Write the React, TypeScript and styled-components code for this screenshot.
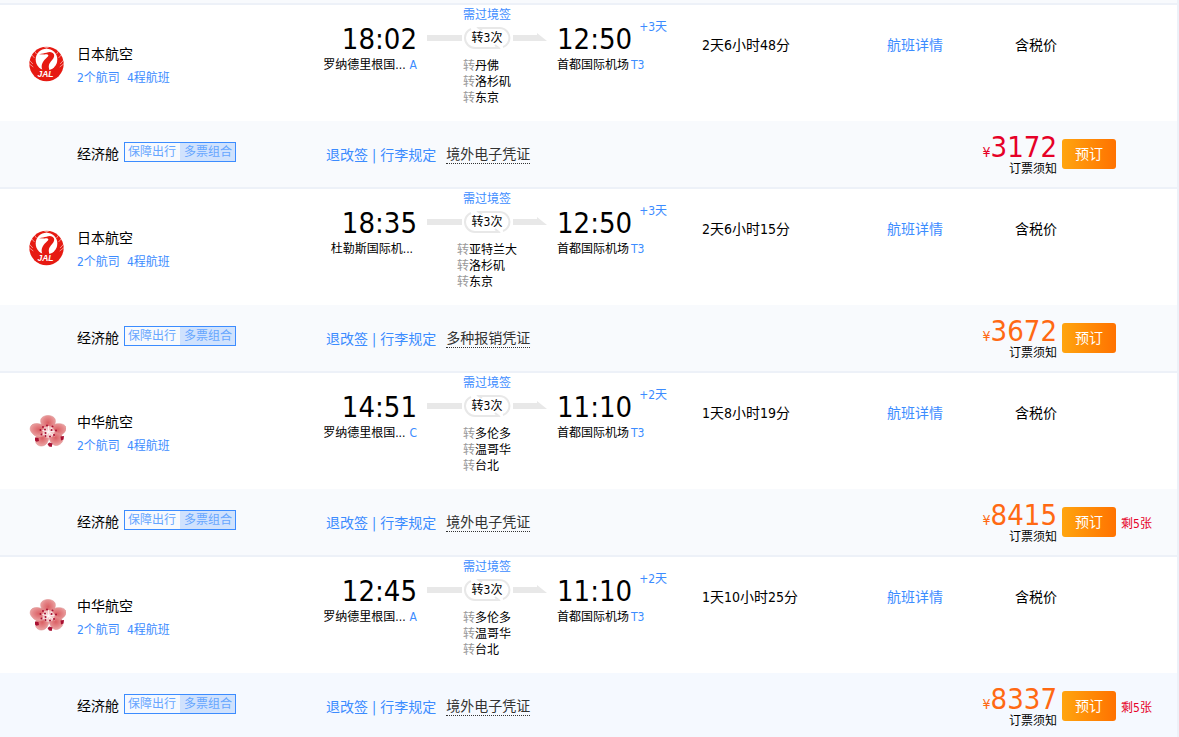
import React from "react";
import styled, { createGlobalStyle, css } from "styled-components";

const GlobalStyle = createGlobalStyle`
  * { box-sizing: border-box; }
  body {
    margin: 0;
    background: #fff;
    color: #000;
    font: 14px/20px "DejaVu Sans Condensed", "Noto Sans CJK SC", sans-serif;
  }
`;

const blue = "#3c8cff";
const line = "#edf1f8";

const Page = styled.main`
  height: 100vh;
  overflow: hidden;
  padding-top: 3px;
  background: #f8fafd;
  border-right: 2px solid ${line};
`;

const Flight = styled.article`
  border-top: 2px solid ${line};
  background: #fff;
`;

const Summary = styled.div`
  display: grid;
  grid-template-columns: 320fr 97fr 140fr 145fr 185fr 128fr 162fr;
  height: 116px;
`;

const Airline = styled.div`
  display: flex;
  align-items: flex-start;
  padding: 40px 0 0 28px;
`;

const Logo = styled.svg`
  flex: none;
  width: 38px;
  height: 38px;
  margin-right: 11px;
`;

const AirlineName = styled.div`
  line-height: 18px;
`;

const Small = styled.div`
  display: flex;
  gap: 7px;
  margin-top: 6px;
  font-size: 12px;
  line-height: 18px;
  color: ${blue};
`;

const Place = styled.div<{ $end?: boolean }>`
  display: flex;
  flex-direction: column;
  align-items: ${(p) => (p.$end ? "flex-end" : "flex-start")};
  padding-top: 17px;
  white-space: nowrap;
`;

const TimeRow = styled.div`
  display: flex;
  align-items: flex-start;
  gap: 7px;
`;

const Time = styled.time`
  font-size: 29px;
  line-height: 35px;
`;

const DayShift = styled.span`
  font-size: 12px;
  line-height: 10px;
  color: ${blue};
`;

const Airport = styled.div<{ $gap: number }>`
  display: flex;
  gap: ${(p) => p.$gap}px;
  font-size: 12px;
  line-height: 16px;
`;

const Terminal = styled.span`
  color: ${blue};
`;

const Route = styled.div`
  display: flex;
  flex-direction: column;
  align-items: center;
  padding-top: 2px;
  font-size: 12px;
  line-height: 16px;
`;

const Visa = styled.a`
  color: ${blue};
  text-decoration: none;
`;

const Track = styled.div`
  display: grid;
  place-items: center;
  margin: 4px 0 9px;
  > * { grid-area: 1 / 1; }
`;

const Stops = styled.ul`
  margin: 0;
  padding: 0;
  list-style: none;
`;

const Via = styled.span`
  color: #999;
`;

const Cell = styled.div`
  padding-top: 30px;
  white-space: nowrap;
`;

const Link = styled.a`
  color: ${blue};
  text-decoration: none;
`;

const Fare = styled.div<{ $active?: boolean }>`
  display: grid;
  grid-template-columns: 326fr 731fr 120fr;
  align-items: center;
  height: 66px;
  background: ${(p) => (p.$active ? "#f5f9ff" : "#f8fafd")};
`;

const Cabin = styled.div`
  display: flex;
  align-items: center;
  gap: 5px;
  padding-left: 77px;
  white-space: nowrap;
`;

const Tag = styled.span`
  display: flex;
  margin-bottom: 4px;
  border: 1px solid ${blue};
  font-size: 12px;
  line-height: 18px;
  color: #66a6ff;
`;

const TagPart = styled.span<{ $filled?: boolean }>`
  padding: 0 4px 0 3px;
  ${(p) =>
    p.$filled &&
    css`
      padding: 0 3px 0 4px;
      background: #d0e2fd;
    `}
`;

const Middle = styled.div`
  display: flex;
  align-items: center;
  justify-content: space-between;
`;

const Rules = styled.div`
  display: flex;
  align-items: center;
  gap: 4px;
  padding-top: 2px;
  color: ${blue};
`;

const Voucher = styled.span`
  margin-left: 6px;
  line-height: 17px;
  color: #333;
  border-bottom: 1px dotted #333;
`;

const PriceBox = styled.div`
  display: flex;
  flex-direction: column;
  align-items: flex-end;
`;

const Price = styled.div<{ $best?: boolean }>`
  display: flex;
  align-items: baseline;
  height: 30px;
  font-size: 29px;
  line-height: 32px;
  color: ${(p) => (p.$best ? "#e60027" : "#ff6913")};
`;

const Currency = styled.span`
  font-size: 14px;
  line-height: 16px;
`;

const Note = styled.span`
  font-size: 12px;
  line-height: 16px;
`;

const Action = styled.div`
  display: flex;
  align-items: center;
  gap: 5px;
  padding-left: 5px;
`;

const BookButton = styled.button`
  width: 54px;
  height: 30px;
  padding: 0;
  border: 0;
  border-radius: 3px;
  background: linear-gradient(90deg, #ffa50f, #ff7200);
  color: #fff;
  font: inherit;
  cursor: pointer;
`;

const Left = styled.span`
  padding-top: 4px;
  font-size: 12px;
  line-height: 16px;
  white-space: nowrap;
  color: #e60027;
`;

function JalLogo() {
  return (
    <Logo viewBox="0 0 38 38" role="img" aria-label="JAL">
      <circle cx="18.500" cy="19" r="17.200" fill="#e61a12" />
      <path d="M14.500 1.500l4 2.200 4-2.200z" fill="#fff" opacity=".5" />
      <circle cx="18.500" cy="14.500" r="10.800" fill="#fff" />
      <path d="M11 9.300c3-1 5.500-1 7.500-1.600 3-1.500 6.500-.8 7.500 1.700.8 3-1.500 5-3.500 7.500-1.800 2.300-2.500 5-.5 9.100h-7c-2.200-3.500-1.500-7.500 1-10.500 2.300-2.700 4.600-4 4.300-5.300-.3-1-2-.9-3.500-.8z" fill="#e61a12" />
      <path d="M.8 14.500l4 4.500M.8 18.500l4.500 3.500M36.200 14.500l-4 4.500M36.200 18.500L31.700 22M3 9l3.500 4M34 9l-3.500 4M6 5.500l2.500 3.500M31 5.500L28.500 9" fill="none" stroke="#fff" strokeWidth=".7" opacity=".75" />
      <text x="9.500" y="32" fill="#fff" fontFamily="Liberation Sans" fontWeight="700" fontStyle="italic" fontSize="8.500">JAL</text>
    </Logo>
  );
}

function BlossomLogo() {
  const dots = [
    [15, 14], [19, 12.500], [24.500, 13.500], [12.500, 17], [28, 17.500], [13.500, 21.500],
    [17.500, 23], [22, 23.500], [26, 22], [17, 16.500], [23.500, 17], [17.500, 20],
  ];
  return (
    <Logo viewBox="0 0 38 38" role="img" aria-label="China Airlines">
      <defs>
        <radialGradient id="petal" cx=".5" cy=".45" r=".6">
          <stop offset="0" stopColor="#da5f63" />
          <stop offset=".6" stopColor="#e58a8c" />
          <stop offset="1" stopColor="#eeb0ae" />
        </radialGradient>
      </defs>
      <g fill="url(#petal)" stroke="#d98485" strokeWidth=".5">
        <path d="M20.500 19C15 16 11.500 9.500 13 6c1-2.300 4-3.500 7-3.500s6 1.200 7 3.500c1.500 3.500-1.500 10-6.500 13z" />
        <path d="M20.500 19C21 13 26.500 10.500 31 10.700c4.500 0 7.500 2.200 7 5.300-.7 4.500-7 8-10.500 8.300-3.500-.3-6-2.300-7-5.300z" />
        <path d="M20.500 19c6-1.500 13 1.500 14.300 5.500 1 4-2.300 7.500-6.300 8-4.500.3-8-5-8-13.500z" />
        <path d="M20.500 19c1.500 6-.5 13.500-6.500 14-3.500.3-6.800-2-6.500-6C7.800 22 14 18 20.500 19z" />
        <path d="M20.500 19C17 24 10 25.500 6 22c-2.500-2.200-4.200-4.500-3.800-7C2.700 12 5 10.500 9 10.600c5 .1 10.500 3.400 11.500 8.400z" />
      </g>
      <circle cx="20.500" cy="19" r="6" fill="#fbe3e2" opacity=".65" />
      <path d="M20.500 19l-5-5M20.500 19v-6M20.500 19l4-5M20.500 19l7-1M20.500 19l6 4M20.500 19l2 5M20.500 19l-3 5M20.500 19l-7 3M20.500 19l-7-2" stroke="#fff" strokeWidth=".7" />
      <g fill="#a80f32">
        {dots.map(([x, y]) => (
          <circle key={`${x}-${y}`} cx={x} cy={y} r="1" />
        ))}
        <path d="M7 24.500l3.500.5.500 3-2.500.8-1.500-1.300zM32.500 23.500l3.500-.5-.5 3.500-2.500 1zM19.500 31l2-1.500 3 1-.8 3.500-2.700-.5z" />
      </g>
    </Logo>
  );
}

function TransferTrack() {
  return (
    <svg width="120" height="22" viewBox="0 0 120 22" aria-hidden="true">
      <path d="M0 8h35v6H0zM86 8h24V6l10 8H86z" fill="#e8e8e8" />
      <path d="M51 1h21a10 10 0 0 1 9 15a9 9 0 0 1-5 4M71 21H48a10 10 0 0 1-10-10a10 10 0 0 1 6-9" fill="none" stroke="#e8e8e8" strokeWidth="2" />
      <path d="M50 0l5 3M68 18l5 4" stroke="#e8e8e8" strokeWidth="2" />
    </svg>
  );
}

type FlightData = {
  airline: "日本航空" | "中华航空";
  depart: string;
  from: string;
  fromTerminal: string;
  stops: string[];
  arrive: string;
  days: number;
  duration: string;
  voucher: string;
  price: number;
  best?: boolean;
  left?: number;
  active?: boolean;
};

const flights: FlightData[] = [
  { airline: "日本航空", depart: "18:02", from: "罗纳德里根国...", fromTerminal: "A", stops: ["丹佛", "洛杉矶", "东京"], arrive: "12:50", days: 3, duration: "2天6小时48分", voucher: "境外电子凭证", price: 3172, best: true },
  { airline: "日本航空", depart: "18:35", from: "杜勒斯国际机...", fromTerminal: "", stops: ["亚特兰大", "洛杉矶", "东京"], arrive: "12:50", days: 3, duration: "2天6小时15分", voucher: "多种报销凭证", price: 3672 },
  { airline: "中华航空", depart: "14:51", from: "罗纳德里根国...", fromTerminal: "C", stops: ["多伦多", "温哥华", "台北"], arrive: "11:10", days: 2, duration: "1天8小时19分", voucher: "境外电子凭证", price: 8415, left: 5 },
  { airline: "中华航空", depart: "12:45", from: "罗纳德里根国...", fromTerminal: "A", stops: ["多伦多", "温哥华", "台北"], arrive: "11:10", days: 2, duration: "1天10小时25分", voucher: "境外电子凭证", price: 8337, left: 5, active: true },
];

function FlightRow({ flight: f }: { flight: FlightData }) {
  return (
    <Flight>
      <Summary>
        <Airline>
          {f.airline === "日本航空" ? <JalLogo /> : <BlossomLogo />}
          <div>
            <AirlineName>{f.airline}</AirlineName>
            <Small>
              <span>2个航司</span>
              <span>4程航班</span>
            </Small>
          </div>
        </Airline>
        <Place $end>
          <Time>{f.depart}</Time>
          <Airport $gap={4}>
            <span>{f.from}</span>
            <Terminal>{f.fromTerminal}</Terminal>
          </Airport>
        </Place>
        <Route>
          <Visa href="#visa">需过境签</Visa>
          <Track>
            <TransferTrack />
            <span>转3次</span>
          </Track>
          <Stops>
            {f.stops.map((s) => (
              <li key={s}>
                <Via>转</Via>
                {s}
              </li>
            ))}
          </Stops>
        </Route>
        <Place>
          <TimeRow>
            <Time>{f.arrive}</Time>
            <DayShift>+{f.days}天</DayShift>
          </TimeRow>
          <Airport $gap={2}>
            <span>首都国际机场</span>
            <Terminal>T3</Terminal>
          </Airport>
        </Place>
        <Cell>{f.duration}</Cell>
        <Cell>
          <Link href="#details">航班详情</Link>
        </Cell>
        <Cell>含税价</Cell>
      </Summary>
      <Fare $active={f.active}>
        <Cabin>
          <span>经济舱</span>
          <Tag>
            <TagPart>保障出行</TagPart>
            <TagPart $filled>多票组合</TagPart>
          </Tag>
        </Cabin>
        <Middle>
          <Rules>
            <Link href="#refund">退改签</Link>
            <span>|</span>
            <Link href="#baggage">行李规定</Link>
            <Voucher>{f.voucher}</Voucher>
          </Rules>
          <PriceBox>
            <Price $best={f.best}>
              <Currency>¥</Currency>
              <span>{f.price}</span>
            </Price>
            <Note>订票须知</Note>
          </PriceBox>
        </Middle>
        <Action>
          <BookButton type="button">预订</BookButton>
          {f.left && <Left>剩{f.left}张</Left>}
        </Action>
      </Fare>
    </Flight>
  );
}

export default function App() {
  return (
    <>
      <GlobalStyle />
      <Page>
        {flights.map((f) => (
          <FlightRow key={f.price} flight={f} />
        ))}
      </Page>
    </>
  );
}
